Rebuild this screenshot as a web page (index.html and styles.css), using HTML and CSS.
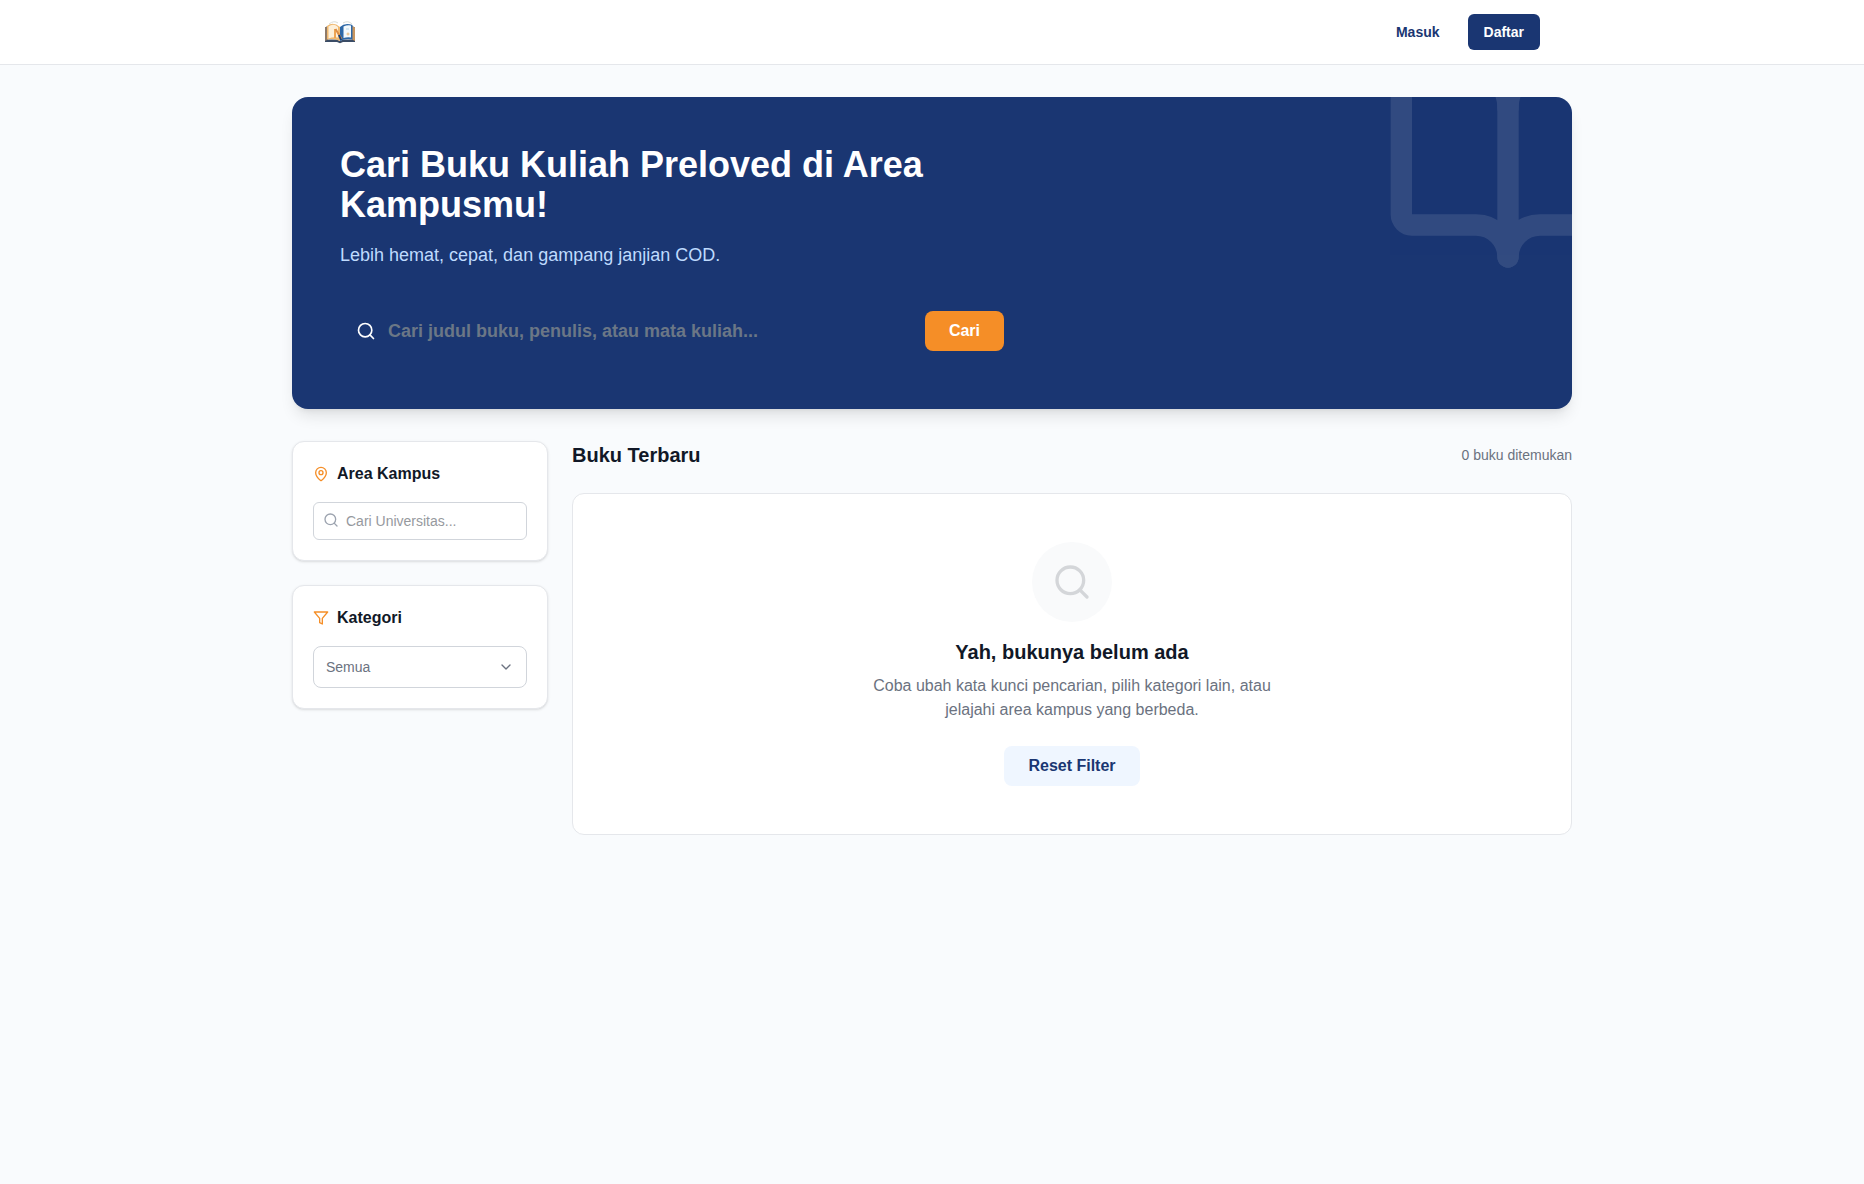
FILE: index.html
```html
<!DOCTYPE html>
<html lang="id">
<head>
    <meta charset="UTF-8">
    <meta name="viewport" content="width=device-width, initial-scale=1.0">
    <title>Buku Kuliah Preloved</title>
    <link rel="stylesheet" href="styles.css">
</head>
<body>
    <!-- navbar -->
    <header class="navbar">
        <div class="navbar-inner">
            <a href="#" class="logo" aria-label="Beranda">
                <svg width="32" height="32" viewBox="0 0 32 32" fill="none">
                    <path d="M1 11.500L4 10v13.500h9l3 1.500 3-1.500h9V10l3 1.500V26H19l-3 1.200L13 26H1z" fill="#3a4c66"/>
                    <path d="M1 11.500L4 10v13.500L1 25z" fill="#8d7a6a"/>
                    <path d="M28 10l3 1.500V25l-3-1.500z" fill="#c9965f"/>
                    <path d="M3 10q6-5 13 1v14q-6-3-13-1.500z" fill="#f0b970"/>
                    <path d="M4.500 10.500q5-3.500 9.500.5v10.500q-5-1-9.500 1z" fill="#fdf0da"/>
                    <path d="M16 11q5-5 12.500-2v14.500q-7-1.500-12.500 1.500z" fill="#2d67a6"/>
                    <path d="M19.500 10.500q4-2 7.500-1v12q-4-.5-7.500.5z" fill="#f3f9fc"/>
                    <path d="M11 22v-9" stroke="#eea453" stroke-width="2"/>
                    <path d="M11.500 13l6 10" stroke="#dc8d45" stroke-width="2"/>
                    <path d="M15 19l2 5" stroke="#1c3f70" stroke-width="2"/>
                    <circle cx="24" cy="18" r="1" stroke="#e8b878"/>
                    <path d="M22 13h3" stroke="#b9d6e6"/>
                    <path d="M5 8q5-4 9-1M19 7q5-3 9 1" stroke="#d9dcd6"/>
                </svg>
            </a>
            <nav class="nav-links">
                <a href="#" class="nav-link">Masuk</a>
                <a href="#" class="nav-link nav-link-primary">Daftar</a>
            </nav>
        </div>
    </header>

    <main class="container">
        <!-- hero -->
        <section class="hero">
            <svg class="hero-icon" width="256" height="256" viewBox="0 0 24 24" fill="none" stroke="currentColor" stroke-width="2" stroke-linecap="round" stroke-linejoin="round">
                <path d="M12 7v14"/>
                <path d="M3 18a1 1 0 0 1-1-1V4a1 1 0 0 1 1-1h5a4 4 0 0 1 4 4 4 4 0 0 1 4-4h5a1 1 0 0 1 1 1v13a1 1 0 0 1-1 1h-6a3 3 0 0 0-3 3 3 3 0 0 0-3-3z"/>
            </svg>
            <div class="hero-content">
                <h1>Cari Buku Kuliah Preloved di Area Kampusmu!</h1>
                <p>Lebih hemat, cepat, dan gampang janjian COD.</p>
                <form class="hero-search">
                    <svg width="20" height="20" viewBox="0 0 24 24" fill="none" stroke="currentColor" stroke-width="2" stroke-linecap="round" stroke-linejoin="round">
                        <circle cx="11" cy="11" r="8"/>
                        <path d="m21 21-4.300-4.300"/>
                    </svg>
                    <input type="text" name="q" aria-label="Cari buku" placeholder="Cari judul buku, penulis, atau mata kuliah...">
                    <button type="submit" class="btn btn-orange">Cari</button>
                </form>
            </div>
        </section>

        <div class="layout">
            <!-- filter -->
            <aside class="sidebar">
                <div class="card filter-card">
                    <label for="kampus" class="filter-title">
                        <svg width="16" height="16" viewBox="0 0 24 24" fill="none" stroke="currentColor" stroke-width="2" stroke-linecap="round" stroke-linejoin="round">
                            <path d="M20 10c0 4.993-5.539 10.193-7.399 11.799a1 1 0 0 1-1.202 0C9.539 20.193 4 14.993 4 10a8 8 0 0 1 16 0"/>
                            <circle cx="12" cy="10" r="3"/>
                        </svg>
                        Area Kampus
                    </label>
                    <div class="field">
                        <svg class="field-icon-left" width="16" height="16" viewBox="0 0 24 24" fill="none" stroke="currentColor" stroke-width="2" stroke-linecap="round" stroke-linejoin="round">
                            <circle cx="11" cy="11" r="8"/>
                            <path d="m21 21-4.300-4.300"/>
                        </svg>
                        <input type="text" id="kampus" placeholder="Cari Universitas...">
                    </div>
                </div>

                <div class="card filter-card">
                    <label for="kategori" class="filter-title">
                        <svg width="16" height="16" viewBox="0 0 24 24" fill="none" stroke="currentColor" stroke-width="2" stroke-linecap="round" stroke-linejoin="round">
                            <path d="M22 3H2l8 9.460V19l4 2v-8.540z"/>
                        </svg>
                        Kategori
                    </label>
                    <div class="field">
                        <select id="kategori">
                            <option>Semua</option>
                        </select>
                        <svg class="field-icon-right" width="16" height="16" viewBox="0 0 24 24" fill="none" stroke="currentColor" stroke-width="2" stroke-linecap="round" stroke-linejoin="round">
                            <path d="m6 9 6 6 6-6"/>
                        </svg>
                    </div>
                </div>
            </aside>

            <!-- daftar buku -->
            <section class="results">
                <div class="results-header">
                    <h2>Buku Terbaru</h2>
                    <span>0 buku ditemukan</span>
                </div>
                <div class="card empty">
                    <div class="empty-icon">
                        <svg width="40" height="40" viewBox="0 0 24 24" fill="none" stroke="currentColor" stroke-width="2" stroke-linecap="round" stroke-linejoin="round">
                            <circle cx="11" cy="11" r="8"/>
                            <path d="m21 21-4.300-4.300"/>
                        </svg>
                    </div>
                    <h3>Yah, bukunya belum ada</h3>
                    <p>Coba ubah kata kunci pencarian, pilih kategori lain, atau jelajahi area kampus yang berbeda.</p>
                    <button type="button" class="btn btn-light">Reset Filter</button>
                </div>
            </section>
        </div>
    </main>
</body>
</html>
```
FILE: styles.css
```css
* {
    box-sizing: border-box;
}

body {
    font-family: "Liberation Sans", Arial, sans-serif;
    font-size: 16px;
    line-height: 24px;
    background-color: #f9fbfd;
    color: #111827;
    margin: 0;
}

h1, h2, h3, p {
    margin: 0;
}

svg {
    display: block;
    flex-shrink: 0;
}

input, select, button {
    font-family: inherit;
}

/* navbar */
.navbar {
    background-color: #fff;
    border-bottom: 1px solid #e5e7eb;
}

.navbar-inner {
    max-width: 1280px;
    height: 64px;
    margin: 0 auto;
    padding: 0 32px;
    display: flex;
    align-items: center;
    justify-content: space-between;
}

.nav-links {
    display: flex;
    align-items: center;
    gap: 12px;
}

.nav-link {
    padding: 8px 16px;
    border-radius: 6px;
    font-size: 14px;
    line-height: 20px;
    font-weight: bold;
    color: #1a3672;
    text-decoration: none;
}

.nav-link-primary {
    background-color: #1a3672;
    color: #fff;
}

.container {
    max-width: 1280px;
    margin: 32px auto;
}

/* hero */
.hero {
    position: relative;
    overflow: hidden;
    padding: 48px;
    margin-bottom: 32px;
    border-radius: 16px;
    background-color: #1a3672;
    color: #fff;
    box-shadow: 0 10px 15px -3px rgba(0, 0, 0, 0.1), 0 4px 6px -4px rgba(0, 0, 0, 0.1);
}

.hero-icon {
    position: absolute;
    top: -64px;
    right: -64px;
    opacity: 0.1;
}

.hero-content {
    position: relative;
    max-width: 672px;
}

.hero h1 {
    font-size: 36px;
    line-height: 40px;
    margin-bottom: 16px;
}

.hero p {
    font-size: 18px;
    line-height: 28px;
    margin-bottom: 32px;
    color: #bfdbfe;
}

.hero-search {
    display: flex;
    align-items: center;
    padding: 8px 8px 8px 16px;
}

.hero-search input {
    flex: 1;
    min-width: 0;
    height: 44px;
    padding: 8px 12px;
    border: none;
    background: transparent;
    color: #fff;
    font-size: 18px;
    font-weight: bold;
}

.hero-search input::placeholder {
    color: #6b7786;
}

.btn {
    height: 40px;
    padding: 8px 24px;
    border: none;
    border-radius: 8px;
    font-size: 16px;
    line-height: 24px;
    font-weight: bold;
    cursor: pointer;
}

.btn-orange {
    background-color: #f58e27;
    color: #fff;
}

.btn-light {
    background-color: #eff6ff;
    color: #1a3672;
}

/* filter */
.layout {
    display: flex;
    align-items: flex-start;
    gap: 24px;
}

.sidebar {
    width: 256px;
    flex-shrink: 0;
    display: flex;
    flex-direction: column;
    gap: 24px;
}

.card {
    background-color: #fff;
    border: 1px solid #e5e7eb;
    border-radius: 12px;
}

.filter-card {
    padding: 20px;
    box-shadow: 0 1px 3px rgba(0, 0, 0, 0.1), 0 1px 2px -1px rgba(0, 0, 0, 0.1);
}

.filter-title {
    display: flex;
    align-items: center;
    gap: 8px;
    margin-bottom: 16px;
    font-weight: bold;
}

.filter-title svg {
    color: #f58e27;
}

.field {
    position: relative;
}

.field input, .field select {
    display: block;
    width: 100%;
    border: 1px solid #d1d5db;
    background-color: #fff;
    font-size: 14px;
}

.field input {
    height: 38px;
    padding: 8px 12px 8px 32px;
    border-radius: 6px;
}

.field input::placeholder {
    color: #96999e;
}

.field select {
    height: 42px;
    padding: 0 36px 0 12px;
    border-radius: 8px;
    color: #6b7280;
    appearance: none;
}

.field-icon-left, .field-icon-right {
    position: absolute;
    pointer-events: none;
}

.field-icon-left {
    top: 10px;
    left: 10px;
    color: #9ca3af;
}

.field-icon-right {
    top: 13px;
    right: 13px;
    color: #6b7280;
}

/* daftar buku */
.results {
    flex: 1;
    min-width: 0;
}

.results-header {
    display: flex;
    align-items: center;
    justify-content: space-between;
    margin-bottom: 24px;
}

.results-header h2, .empty h3 {
    font-size: 20px;
    line-height: 28px;
}

.results-header span {
    font-size: 14px;
    line-height: 20px;
    color: #6b7280;
}

.empty {
    display: flex;
    flex-direction: column;
    align-items: center;
    padding: 48px;
    text-align: center;
}

.empty-icon {
    width: 80px;
    height: 80px;
    margin-bottom: 16px;
    border-radius: 50%;
    display: flex;
    align-items: center;
    justify-content: center;
    background-color: #f9fafb;
    color: #d4d6d9;
}

.empty h3 {
    margin-bottom: 8px;
}

.empty p {
    max-width: 448px;
    margin-bottom: 24px;
    color: #6b7280;
}
```
